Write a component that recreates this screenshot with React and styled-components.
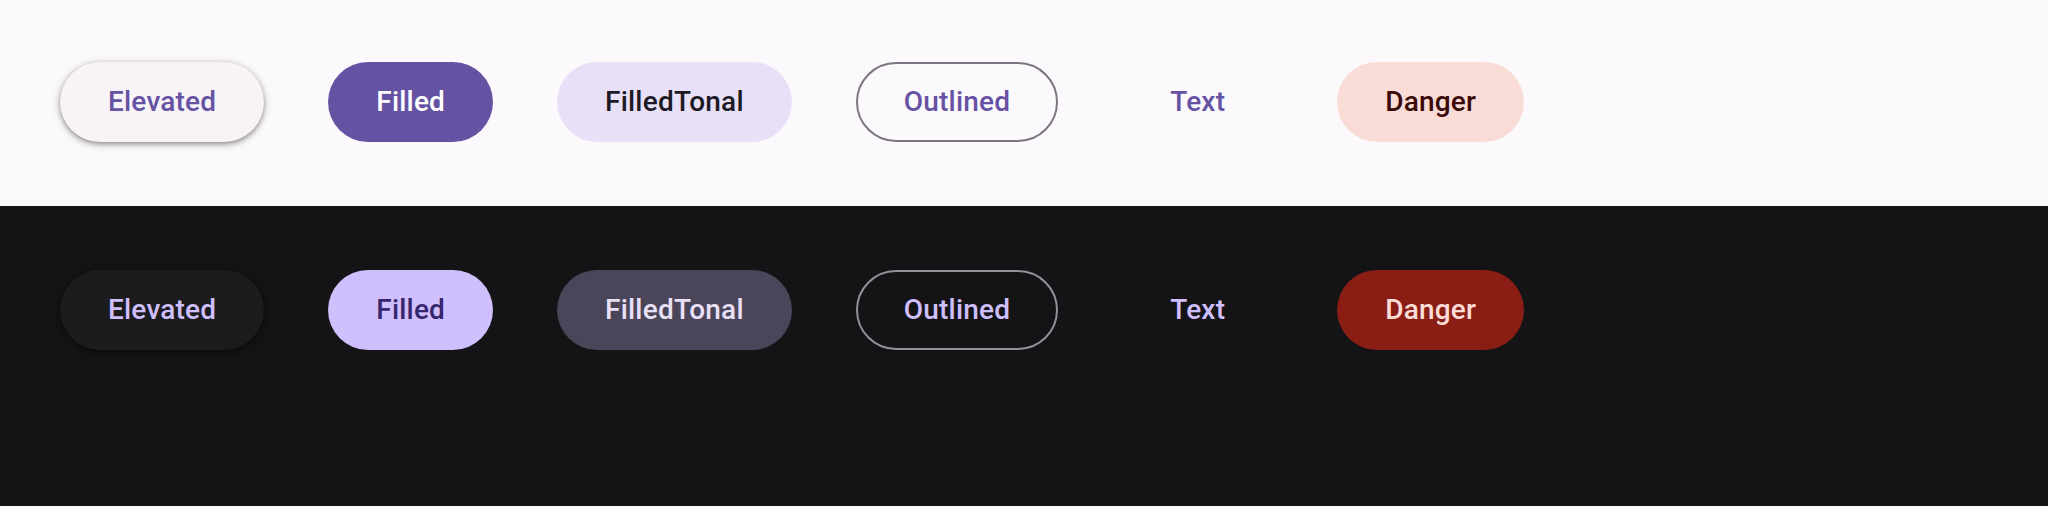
import React from "react";
import styled, { createGlobalStyle, css } from "styled-components";

const Global = createGlobalStyle`
  html, body { margin: 0; padding: 0; background: #141316; }
  body { font-family: Roboto, "Noto Sans", "Liberation Sans", sans-serif; }
  #root { min-height: 506px; display: flex; flex-direction: column; }
`;

const themes = {
  light: {
    bg: "#fcf9fc",
    primary: "#6552a3",
    onPrimary: "#ffffff",
    elevatedBg: "#f7f3f7",
    elevatedShadow: "0 2px 4px rgba(0,0,0,0.3), 0 2px 7px 2px rgba(0,0,0,0.15)",
    tonalBg: "#e8e0f7",
    onTonal: "#1d1a24",
    outline: "#7a7580",
    dangerBg: "#fadcd6",
    onDanger: "#3b0909",
  },
  dark: {
    bg: "#141316",
    primary: "#cfbffc",
    onPrimary: "#37266e",
    elevatedBg: "#1c1b1e",
    elevatedShadow: "0 2px 4px rgba(0,0,0,0.3), 0 2px 7px 2px rgba(0,0,0,0.15)",
    tonalBg: "#4a4558",
    onTonal: "#e8e0f7",
    outline: "#948f99",
    dangerBg: "#8b1e14",
    onDanger: "#fbdcd6",
  },
};

const Section = styled.section`
  background: ${(p) => p.$t.bg};
  padding: ${(p) => (p.$first ? "62px 60px 64px" : "64px 60px")};
  display: flex;
  align-items: center;
  gap: 64px;
  ${(p) => !p.$first && css`flex: 1; align-items: flex-start;`}
`;

const variantStyles = {
  elevated: (t) => css`
    background: ${t.elevatedBg};
    color: ${t.primary};
    box-shadow: ${t.elevatedShadow};
  `,
  filled: (t) => css`
    background: ${t.primary};
    color: ${t.onPrimary};
  `,
  tonal: (t) => css`
    background: ${t.tonalBg};
    color: ${t.onTonal};
  `,
  outlined: (t) => css`
    background: transparent;
    color: ${t.primary};
    border: 2px solid ${t.outline};
    padding: 0 46px;
  `,
  text: (t) => css`
    background: transparent;
    color: ${t.primary};
  `,
  danger: (t) => css`
    background: ${t.dangerBg};
    color: ${t.onDanger};
  `,
};

const Button = styled.button`
  box-sizing: border-box;
  height: 80px;
  padding: 0 48px;
  border: none;
  border-radius: 40px;
  font-family: Roboto, "Noto Sans", "Liberation Sans", sans-serif;
  font-weight: 500;
  font-size: 28px;
  letter-spacing: 0.2px;
  line-height: 1;
  display: inline-flex;
  align-items: center;
  justify-content: center;
  cursor: pointer;
  flex: none;
  ${(p) => variantStyles[p.$variant](p.$t)}
`;

const buttons = [
  ["elevated", "Elevated"],
  ["filled", "Filled"],
  ["tonal", "FilledTonal"],
  ["outlined", "Outlined"],
  ["text", "Text"],
  ["danger", "Danger"],
];

function Row({ mode, first }) {
  const t = themes[mode];
  return (
    <Section $t={t} $first={first}>
      {buttons.map(([v, label]) => (
        <Button key={v} $variant={v} $t={t}>
          {label}
        </Button>
      ))}
    </Section>
  );
}

export default function App() {
  return (
    <>
      <Global />
      <Row mode="light" first />
      <Row mode="dark" />
    </>
  );
}
